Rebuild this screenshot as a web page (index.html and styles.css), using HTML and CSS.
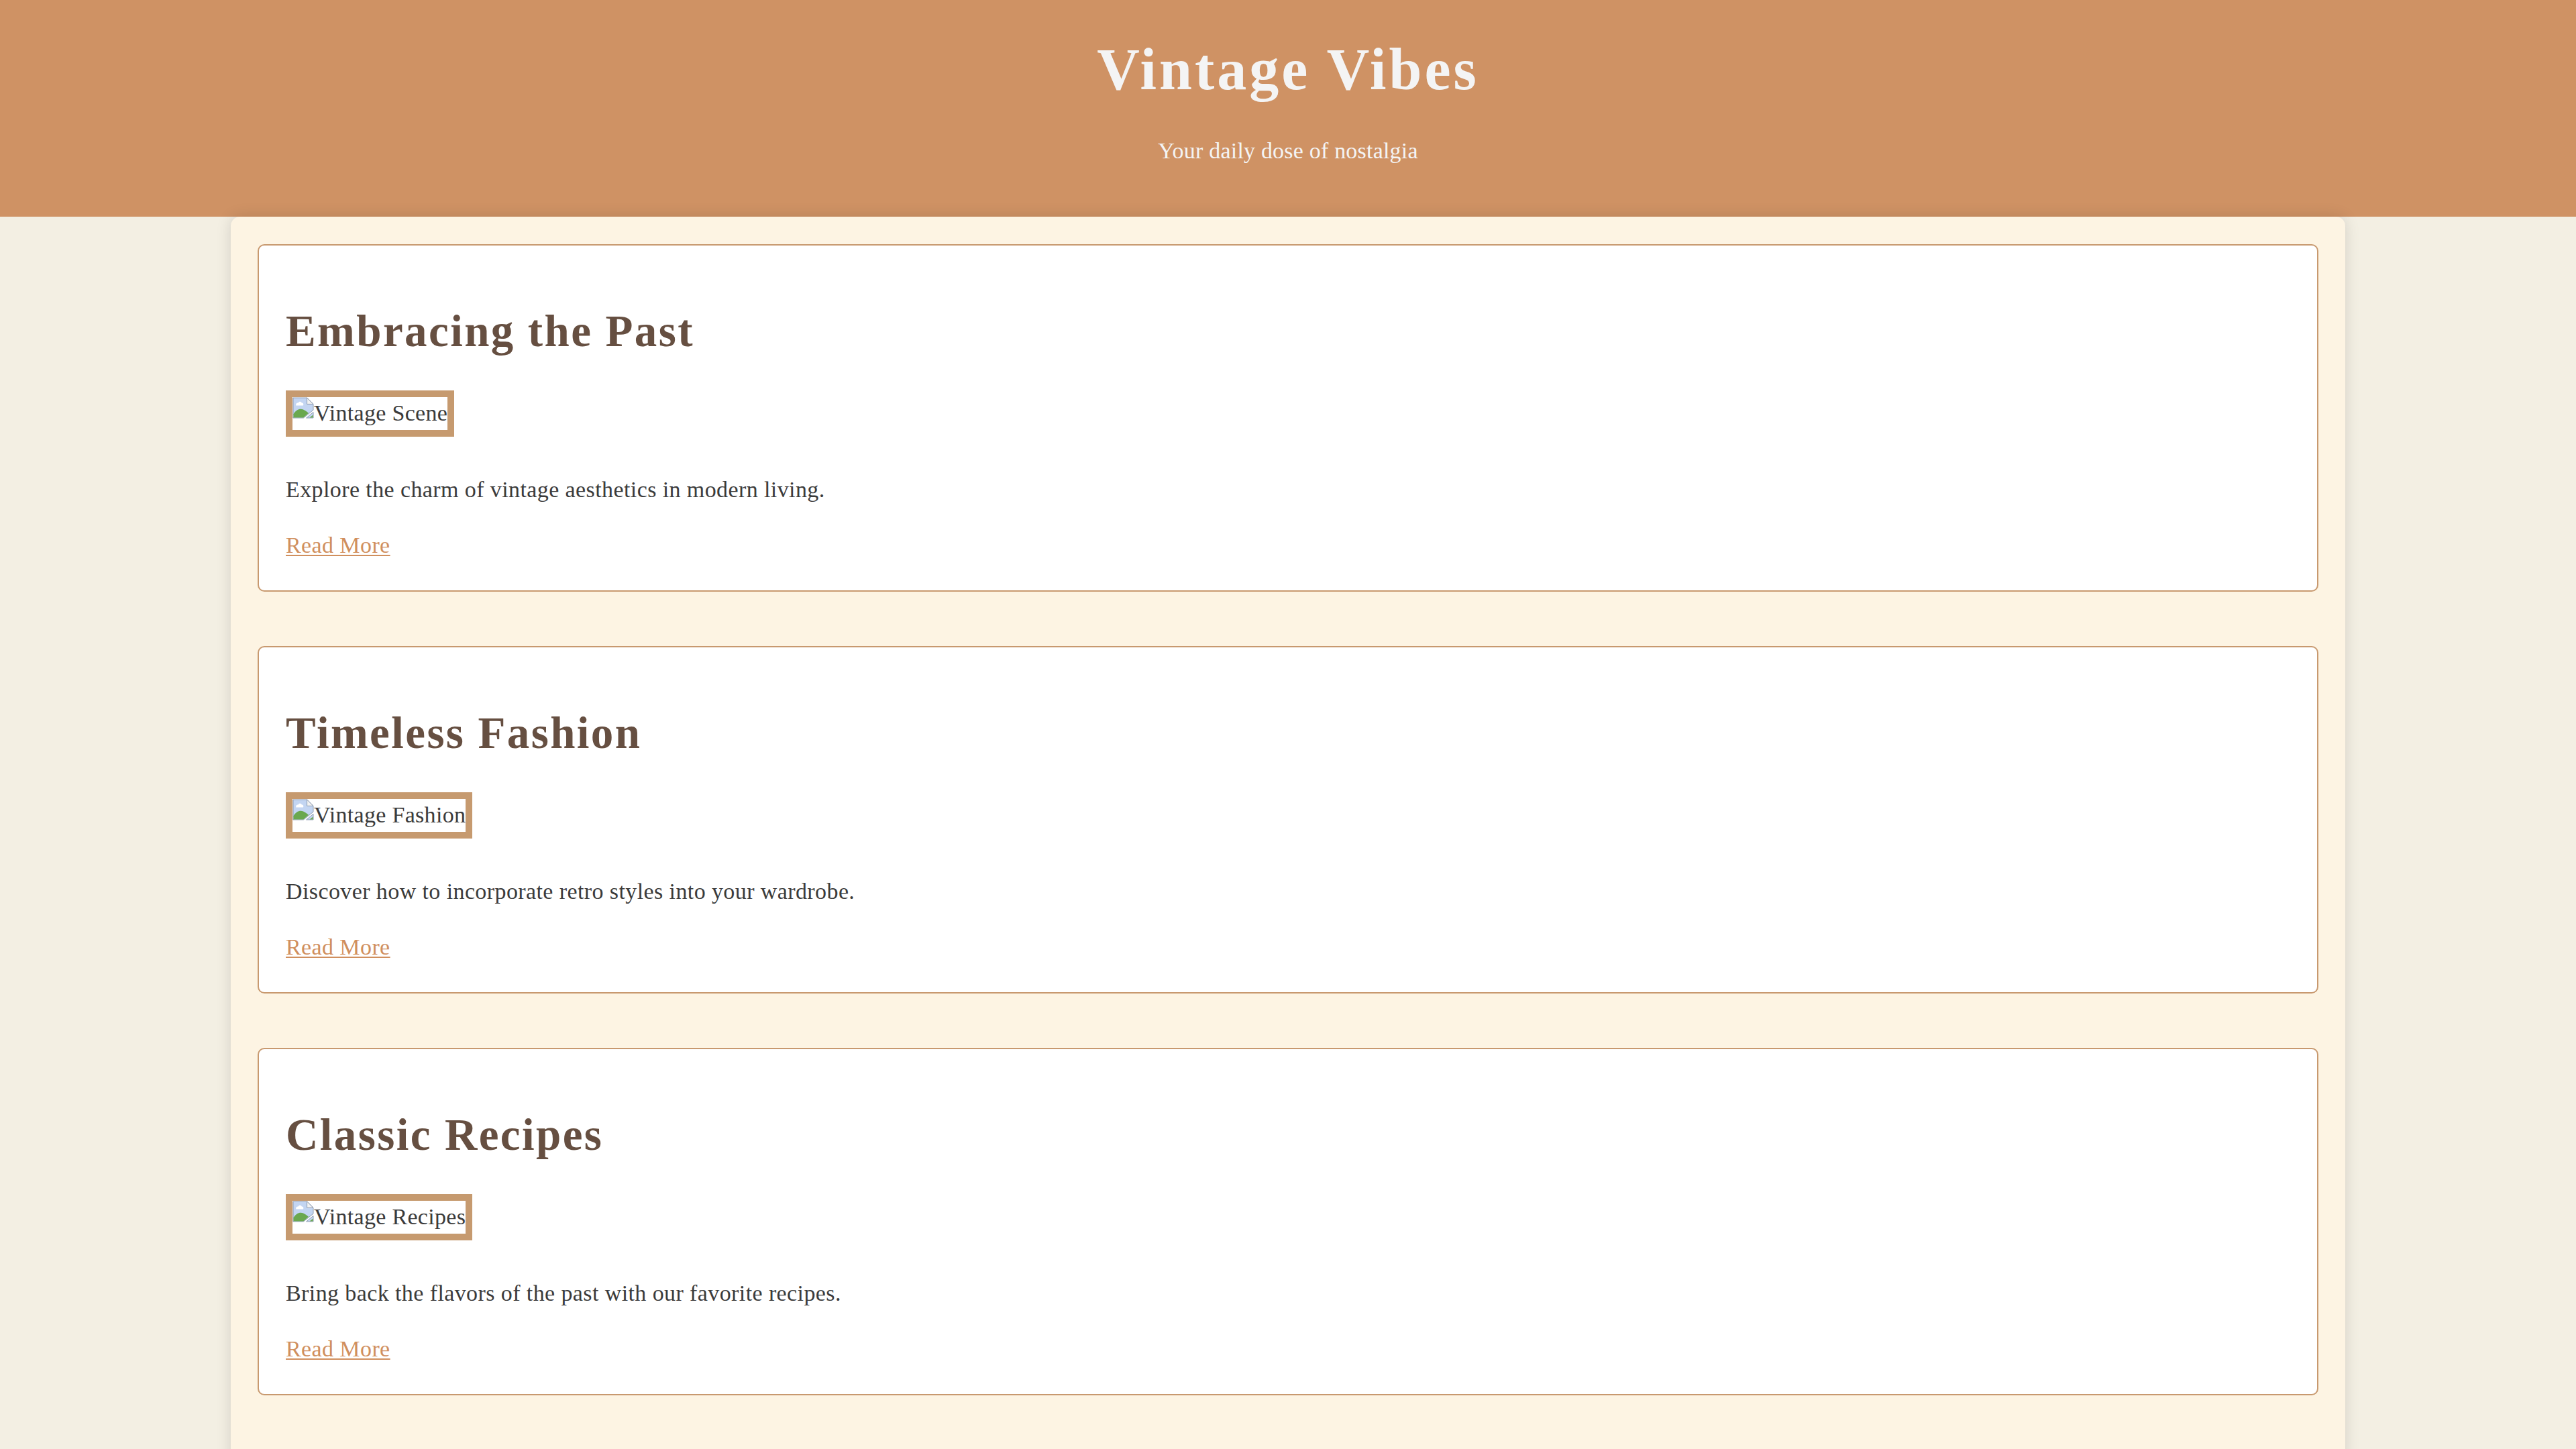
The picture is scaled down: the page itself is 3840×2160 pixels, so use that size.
FILE: index.html
```html
<!DOCTYPE html>
<html lang="en">
<head>
<meta charset="utf-8">
<title>Vintage Vibes</title>
<link rel="stylesheet" href="styles.css">
</head>
<body>
<header class="site-header">
  <h1 class="site-title">Vintage Vibes</h1>
  <p class="tagline">Your daily dose of nostalgia</p>
</header>
<main class="container">
  <article class="post">
    <h2 class="post-title">Embracing the Past</h2>
    <div class="post-image">
      <svg class="broken-icon" viewBox="0 0 16 16" width="32" height="32" aria-hidden="true">
        <path d="M0.5 0.5H10.8L15.5 5.2V9.6L8.2 15.5H0.5Z" fill="#c3d5f2" stroke="#8e9cb2" stroke-width="0.5"/>
        <path d="M0.75 12.6C2.6 9.4 5.4 8.2 8 9.2C9.7 9.9 10.9 10.9 12 11.9L8.2 15.25H0.75Z" fill="#6aa84f"/>
        <path d="M2.6 6.2C2.4 4.9 3.3 4.1 4.3 4.3C4.7 3.2 6.3 3 6.9 4.2C7.9 4.1 8.5 5.2 8 6.2Z" fill="#ffffff"/>
        <path d="M10.8 0.5V5.2H15.5Z" fill="#f2f2f2" stroke="#8e9cb2" stroke-width="0.5" stroke-linejoin="round"/>
        <path d="M15.5 11.2V15.5H10.3Z" fill="#c3d5f2" stroke="#8e9cb2" stroke-width="0.5"/>
        <path d="M15.25 13.2V15.25H12.8Z" fill="#6aa84f"/>
      </svg><span class="alt-text">Vintage Scene</span>
    </div>
    <p class="post-excerpt">Explore the charm of vintage aesthetics in modern living.</p>
    <a class="read-more" href="#">Read More</a>
  </article>
  <article class="post">
    <h2 class="post-title">Timeless Fashion</h2>
    <div class="post-image">
      <svg class="broken-icon" viewBox="0 0 16 16" width="32" height="32" aria-hidden="true">
        <path d="M0.5 0.5H10.8L15.5 5.2V9.6L8.2 15.5H0.5Z" fill="#c3d5f2" stroke="#8e9cb2" stroke-width="0.5"/>
        <path d="M0.75 12.6C2.6 9.4 5.4 8.2 8 9.2C9.7 9.9 10.9 10.9 12 11.9L8.2 15.25H0.75Z" fill="#6aa84f"/>
        <path d="M2.6 6.2C2.4 4.9 3.3 4.1 4.3 4.3C4.7 3.2 6.3 3 6.9 4.2C7.9 4.1 8.5 5.2 8 6.2Z" fill="#ffffff"/>
        <path d="M10.8 0.5V5.2H15.5Z" fill="#f2f2f2" stroke="#8e9cb2" stroke-width="0.5" stroke-linejoin="round"/>
        <path d="M15.5 11.2V15.5H10.3Z" fill="#c3d5f2" stroke="#8e9cb2" stroke-width="0.5"/>
        <path d="M15.25 13.2V15.25H12.8Z" fill="#6aa84f"/>
      </svg><span class="alt-text">Vintage Fashion</span>
    </div>
    <p class="post-excerpt">Discover how to incorporate retro styles into your wardrobe.</p>
    <a class="read-more" href="#">Read More</a>
  </article>
  <article class="post">
    <h2 class="post-title">Classic Recipes</h2>
    <div class="post-image">
      <svg class="broken-icon" viewBox="0 0 16 16" width="32" height="32" aria-hidden="true">
        <path d="M0.5 0.5H10.8L15.5 5.2V9.6L8.2 15.5H0.5Z" fill="#c3d5f2" stroke="#8e9cb2" stroke-width="0.5"/>
        <path d="M0.75 12.6C2.6 9.4 5.4 8.2 8 9.2C9.7 9.9 10.9 10.9 12 11.9L8.2 15.25H0.75Z" fill="#6aa84f"/>
        <path d="M2.6 6.2C2.4 4.9 3.3 4.1 4.3 4.3C4.7 3.2 6.3 3 6.9 4.2C7.9 4.1 8.5 5.2 8 6.2Z" fill="#ffffff"/>
        <path d="M10.8 0.5V5.2H15.5Z" fill="#f2f2f2" stroke="#8e9cb2" stroke-width="0.5" stroke-linejoin="round"/>
        <path d="M15.5 11.2V15.5H10.3Z" fill="#c3d5f2" stroke="#8e9cb2" stroke-width="0.5"/>
        <path d="M15.25 13.2V15.25H12.8Z" fill="#6aa84f"/>
      </svg><span class="alt-text">Vintage Recipes</span>
    </div>
    <p class="post-excerpt">Bring back the flavors of the past with our favorite recipes.</p>
    <a class="read-more" href="#">Read More</a>
  </article>
</main>
</body>
</html>
```
FILE: styles.css
```css
html, body {
  margin: 0;
  padding: 0;
}

body {
  background: #f3efe3;
  color: #3b3b3b;
  font-family: Georgia, "Liberation Serif", "Times New Roman", serif;
  font-size: 34px;
  line-height: 1.6;
}

.site-header {
  background: #cf9264;
  color: #f4f4f4;
  text-align: center;
  padding: 40px 0;
}

.site-title {
  margin: 0;
  font-size: 88px;
  font-weight: bold;
  line-height: 128px;
  letter-spacing: 4px;
}

.tagline {
  margin: 31px 0 33px;
  font-size: 34px;
  line-height: 51px;
  letter-spacing: 0.2px;
}

.container {
  width: 3072px;
  margin: 0 auto;
  padding: 41px 40px 40px;
  background: #fdf4e3;
  border-radius: 14px 14px 0 0;
  box-shadow: 0 0 22px rgba(0, 0, 0, 0.13);
}

.post {
  background: #ffffff;
  border: 2px solid #c8996f;
  border-radius: 10px;
  padding: 40px 40px 42px;
  margin-bottom: 81px;
}

.post-title {
  margin: 51px 0 52px;
  color: #664f41;
  font-size: 67px;
  font-weight: bold;
  line-height: 73px;
  letter-spacing: 2.4px;
}

.post-image {
  display: flex;
  align-items: flex-start;
  width: fit-content;
  border: 10px solid #c69a6f;
  background: #ffffff;
  line-height: 51px;
  margin-bottom: 53px;
  color: #3b3b3b;
}

.broken-icon {
  display: block;
  flex: none;
}

.alt-text {
  letter-spacing: 0.3px;
  margin-top: -2px;
}

.post-excerpt {
  margin: 0 0 32px;
  line-height: 51px;
  letter-spacing: 0.4px;
}

.read-more {
  display: block;
  width: fit-content;
  color: #d08f5e;
  line-height: 51px;
  text-decoration: underline;
  text-decoration-thickness: 2px;
  text-underline-offset: 3px;
  letter-spacing: 0.4px;
}
```
